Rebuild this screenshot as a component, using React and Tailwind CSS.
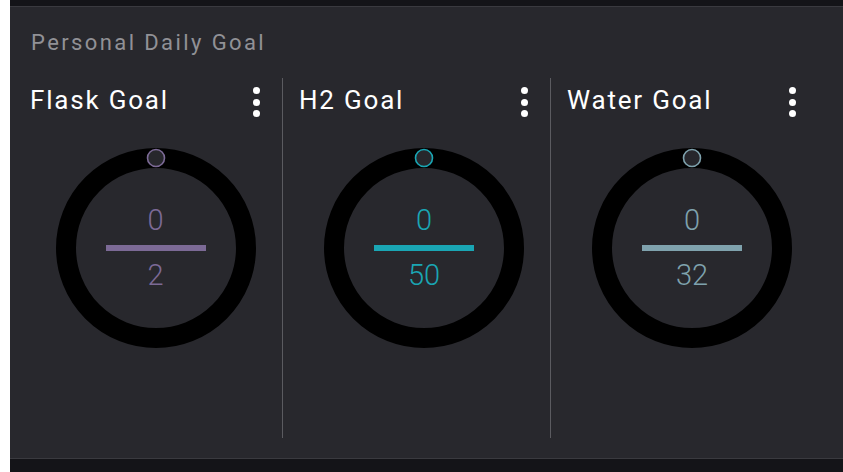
import React from 'react';

const goals = [
  { id: 'flask', title: 'Flask Goal', current: 0, target: 2, color: '#7c6a96' },
  { id: 'h2', title: 'H2 Goal', current: 0, target: 50, color: '#1aa6b4' },
  { id: 'water', title: 'Water Goal', current: 0, target: 32, color: '#7fa2ad' },
];

const Dots = () => (
  <div className="flex flex-col items-center gap-[4.5px] pt-[1px]">
    <span className="h-[7px] w-[7px] rounded-full bg-white" />
    <span className="h-[7px] w-[7px] rounded-full bg-white" />
    <span className="h-[7px] w-[7px] rounded-full bg-white" />
  </div>
);

const GoalRing = ({ goal }) => (
  <div className="relative h-[200px] w-[200px]">
    <svg width="200" height="200" viewBox="0 0 200 200" className="absolute inset-0">
      <circle cx="100" cy="100" r="90" fill="none" stroke="#000" strokeWidth="20" />
      <circle cx="100" cy="10" r="8.5" fill="#27272c" stroke={goal.color} strokeWidth="1.6" />
    </svg>
    <div className="absolute inset-0 flex flex-col items-center justify-center" style={{ color: goal.color }}>
      <span className="text-[29px] font-light leading-none -mt-[1px]">{goal.current}</span>
      <span className="my-[10px] h-[6px] w-[100px]" style={{ backgroundColor: goal.color }} />
      <span className="text-[29px] font-light leading-none">{goal.target}</span>
    </div>
  </div>
);

export default function App() {
  return (
    <div className="h-[472px] w-[843px] overflow-hidden bg-white pl-[10px] font-['Roboto','Liberation_Sans',sans-serif]">
      <div className="flex h-full flex-col bg-[#141418]">
        <div className="h-[7px] border-b border-[#3a3a3f]" />
        <div className="flex h-[451px] flex-col bg-[#28282d] px-[4px]">
          <div className="pl-[17px] pt-[24px] text-[22px] leading-[24px] tracking-[2.4px] text-[#919196]">Personal Daily Goal</div>
          <div className="mt-[23px] flex h-[360px]">
            {goals.map((goal, i) => (
              <div key={goal.id} className={`flex w-[268px] flex-col ${i > 0 ? 'border-l border-[#5b5b60]' : ''}`}>
                <div className="flex items-start justify-between pl-4 pr-[22px] pt-[8px]">
                  <span className="mt-[1px] text-[26px] leading-[26px] tracking-[1.8px] text-white">{goal.title}</span>
                  <Dots />
                </div>
                <div className="mt-[31px] flex justify-center pl-[15px]">
                  <GoalRing goal={goal} />
                </div>
              </div>
            ))}
          </div>
        </div>
        <div className="border-t border-[#3a3a3f]" />
      </div>
    </div>
  );
}
